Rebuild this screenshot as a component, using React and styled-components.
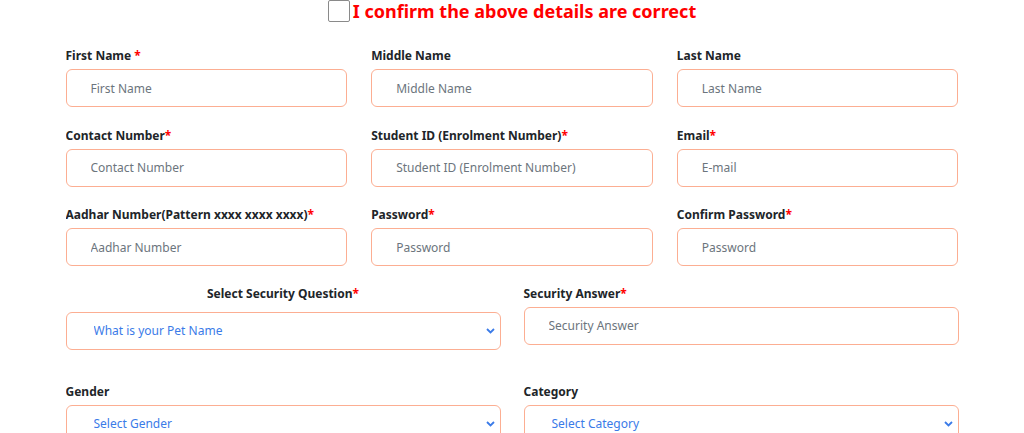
import React from 'react';
import styled, {createGlobalStyle} from 'styled-components';

const GlobalStyle = createGlobalStyle`
  body {
    margin: 0;
    background: #fff;
    font-family: "Noto Sans", "Open Sans", sans-serif;
  }
`;

const Chevron = () => (
    <svg width="9" height="6" viewBox="0 0 9 6">
        <path d="M1 1 L4.5 4.5 L8 1" fill="none" stroke="#3b7be8" strokeWidth="1.8"/>
    </svg>
)

const Field = ({label, required, placeholder}) => (
    <Group>
        <Label>{label}{required && <Star>{required}</Star>}</Label>
        <Input placeholder={placeholder}/>
    </Group>
)

const SelectField = ({label, required, options, centered}) => (
    <Group>
        <Label centered={centered}>{label}{required && <Star>*</Star>}</Label>
        <SelectWrap>
            <Select defaultValue={options[0]}>
                {options.map(o => <option key={o}>{o}</option>)}
            </Select>
            <Arrow><Chevron/></Arrow>
        </SelectWrap>
    </Group>
)

const App = () => {
    return (
        <>
            <GlobalStyle/>
            <Page>
                <Confirm>
                    <CheckBox/>
                    <ConfirmText>I confirm the above details are correct</ConfirmText>
                </Confirm>
                <Grid3>
                    <Field label="First Name" required=" *" placeholder="First Name"/>
                    <Field label="Middle Name" placeholder="Middle Name"/>
                    <Field label="Last Name" placeholder="Last Name"/>
                    <Field label="Contact Number" required="*" placeholder="Contact Number"/>
                    <Field label="Student ID (Enrolment Number)" required="*" placeholder="Student ID (Enrolment Number)"/>
                    <Field label="Email" required="*" placeholder="E-mail"/>
                    <Field label="Aadhar Number(Pattern xxxx xxxx xxxx)" required="*" placeholder="Aadhar Number"/>
                    <Field label="Password" required="*" placeholder="Password"/>
                    <Field label="Confirm Password" required="*" placeholder="Password"/>
                </Grid3>
                <Grid2>
                    <SelectField centered label="Select Security Question" required
                                 options={["What is your Pet Name", "What is your birth place"]}/>
                    <Field label="Security Answer" required="*" placeholder="Security Answer"/>
                </Grid2>
                <Grid2 spaced>
                    <SelectField label="Gender" options={["Select Gender", "Male", "Female"]}/>
                    <SelectField label="Category" options={["Select Category", "General", "OBC", "SC", "ST"]}/>
                </Grid2>
            </Page>
        </>
    )
}

const Page = styled.div`
  width: 893px;
  margin: 0 auto;
  height: 433px;
  overflow: hidden;
`;

const Confirm = styled.label`
  display: flex;
  justify-content: center;
  align-items: center;
  height: 22px;
  gap: 3px;
  margin-bottom: 24px;
`;

const CheckBox = styled.span`
  width: 20px;
  height: 20px;
  border: 1px solid #8a8a8a;
  border-radius: 2px;
  background: #fff;
`;

const ConfirmText = styled.span`
  color: #ff0000;
  font-size: 18px;
  font-weight: 700;
  line-height: 22px;
`;

const Grid3 = styled.div`
  display: grid;
  grid-template-columns: repeat(3, 1fr);
  column-gap: 24px;
  row-gap: 18.5px;
`;

const Grid2 = styled.div`
  display: grid;
  grid-template-columns: 1fr 1fr;
  column-gap: 23px;
  margin-top: ${p => p.spaced ? '32px' : '17.5px'};
`;

const Group = styled.div`
  display: flex;
  flex-direction: column;
`;

const Label = styled.div`
  font-size: 12px;
  font-weight: 700;
  line-height: 19px;
  color: #212529;
  margin-bottom: ${p => p.centered ? '9px' : '4px'};
  text-align: ${p => p.centered ? 'center' : 'left'};
`;

const Star = styled.span`
  color: #ff0000;
`;

const Input = styled.input`
  box-sizing: border-box;
  height: 38px;
  width: 100%;
  border: 1px solid #fcae92;
  border-radius: 6px;
  padding: 0 24px;
  font-family: inherit;
  font-size: 12px;
  color: #212529;
  outline: none;

  &::placeholder {
    color: #6c757d;
  }
`;

const SelectWrap = styled.div`
  position: relative;
`;

const Select = styled.select`
  box-sizing: border-box;
  height: 38px;
  width: 100%;
  border: 1px solid #fcae92;
  border-radius: 6px;
  padding: 0 27px;
  font-family: inherit;
  font-size: 12px;
  color: #3b7be8;
  background: #fff;
  appearance: none;
  outline: none;
`;

const Arrow = styled.span`
  position: absolute;
  right: 6px;
  top: 50%;
  transform: translateY(-50%);
  display: flex;
  pointer-events: none;
`;

export default App;
